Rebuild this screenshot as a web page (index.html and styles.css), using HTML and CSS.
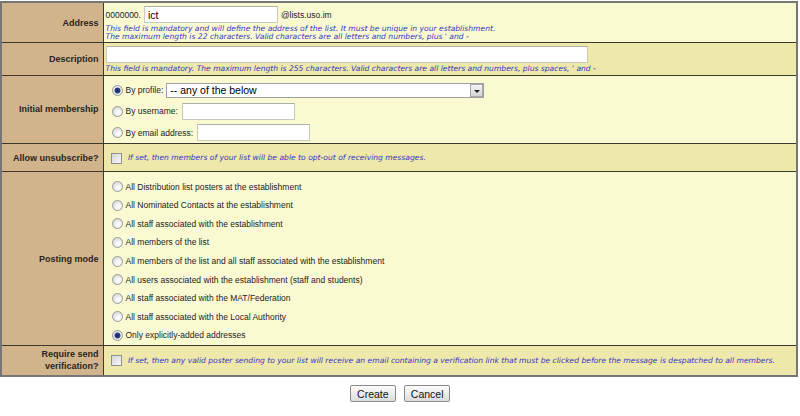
FILE: index.html
```html
<!DOCTYPE html>
<html>
<head>
    <title>New distribution list</title>
    <link rel="stylesheet" href="styles.css">
</head>
<body>
    <form class="list-form">
        <table class="form-table">
            <colgroup>
                <col class="col-label">
                <col>
            </colgroup>

            <tr class="row-light">
                <td class="label">Address</td>
                <td class="value">
                    <div class="address-line">
                        <span>0000000.</span>
                        <input type="text" class="text-input address-input" value="ict">
                        <span>@lists.uso.im</span>
                    </div>
                    <div class="help">This field is mandatory and will define the address of the list. It must be unique in your establishment.<br>The maximum length is 22 characters. Valid characters are all letters and numbers, plus ' and -</div>
                </td>
            </tr>

            <tr class="row-dark">
                <td class="label">Description</td>
                <td class="value">
                    <input type="text" class="text-input desc-input">
                    <div class="help">This field is mandatory. The maximum length is 255 characters. Valid characters are all letters and numbers, plus spaces, ' and -</div>
                </td>
            </tr>

            <tr class="row-light">
                <td class="label">Initial membership</td>
                <td class="value membership">
                    <label class="option option-wide">
                        <input type="radio" name="membership" checked> By profile:
                        <span class="select-box">
                            <select class="profile-select">
                                <option>-- any of the below</option>
                            </select>
                            <span class="select-arrow"></span>
                        </span>
                    </label>
                    <label class="option option-wide">
                        <input type="radio" name="membership"> By username:
                        <input type="text" class="text-input small-input">
                    </label>
                    <label class="option option-wide">
                        <input type="radio" name="membership"> By email address:
                        <input type="text" class="text-input small-input">
                    </label>
                </td>
            </tr>

            <tr class="row-dark check-row">
                <td class="label">Allow unsubscribe?</td>
                <td class="value check-cell">
                    <input type="checkbox">
                    <span class="help">If set, then members of your list will be able to opt-out of receiving messages.</span>
                </td>
            </tr>

            <tr class="row-light">
                <td class="label">Posting mode</td>
                <td class="value posting">
                    <label class="option"><input type="radio" name="posting"> All Distribution list posters at the establishment</label>
                    <label class="option"><input type="radio" name="posting"> All Nominated Contacts at the establishment</label>
                    <label class="option"><input type="radio" name="posting"> All staff associated with the establishment</label>
                    <label class="option"><input type="radio" name="posting"> All members of the list</label>
                    <label class="option"><input type="radio" name="posting"> All members of the list and all staff associated with the establishment</label>
                    <label class="option"><input type="radio" name="posting"> All users associated with the establishment (staff and students)</label>
                    <label class="option"><input type="radio" name="posting"> All staff associated with the MAT/Federation</label>
                    <label class="option"><input type="radio" name="posting"> All staff associated with the Local Authority</label>
                    <label class="option"><input type="radio" name="posting" checked> Only explicitly-added addresses</label>
                </td>
            </tr>

            <tr class="row-dark verify-row">
                <td class="label">Require send<br>verification?</td>
                <td class="value check-cell">
                    <input type="checkbox">
                    <span class="help">If set, then any valid poster sending to your list will receive an email containing a verification link that must be clicked before the message is despatched to all members.</span>
                </td>
            </tr>
        </table>

        <div class="buttons">
            <button type="button" class="btn">Create</button>
            <button type="button" class="btn">Cancel</button>
        </div>
    </form>
</body>
</html>
```

FILE: styles.css
```css
/* GENERAL */
body {
    margin: 0;
    padding: 0;
    background-color: #fff;
    font-family: 'Liberation Sans', Arial, sans-serif;
    font-size: 8.5px;
    color: #222;
}

.list-form {
    margin: 0;
}


/* FORM TABLE */
.form-table {
    width: 798px;
    margin: 1px 0 0 0;
    border-collapse: collapse;
    table-layout: fixed;
    border: 2px solid #767676;
}

.col-label {
    width: 102px;
}

.form-table td {
    border: 1px solid #3b3a2c;
    padding: 0;
}

.label {
    background-color: #d2b48c;
    text-align: right;
    vertical-align: middle;
    font-weight: bold;
    font-size: 9px;
    color: #26261e;
    padding-right: 4px !important;
    line-height: 12px;
}

.value {
    padding: 3px 3px 2px 2px !important;
    vertical-align: top;
}

.row-light .value {
    background-color: #fafad2;
}

.row-dark .value {
    background-color: #eee8aa;
}

.check-row {
    height: 28px;
}

.verify-row {
    height: 31px;
}


/* HELP TEXT */
.help {
    font-family: 'DejaVu Sans', Verdana, sans-serif;
    font-style: italic;
    font-size: 7.6px;
    line-height: 7.5px;
    color: #3636c4;
    margin-top: 2px;
}


/* TEXT INPUTS */
.text-input {
    box-sizing: border-box;
    height: 17px;
    border: 1px solid #c9c9c0;
    border-top-color: #b0b0a8;
    background-color: #fff;
    font-family: 'Liberation Sans', Arial, sans-serif;
    font-size: 10.5px;
    padding: 0 3px;
    margin: 0;
    outline: none;
}

.address-line {
    display: flex;
    align-items: center;
    gap: 3px;
}

.address-input {
    width: 134px;
}

.desc-input {
    display: block;
    width: 482px;
}

.small-input {
    width: 113px;
    margin-left: 2px;
}


/* RADIO OPTIONS */
.option {
    display: flex;
    align-items: center;
    gap: 2px;
    height: 18.6px;
    padding-left: 6px;
}

.option-wide {
    height: 21.3px;
}

.membership {
    padding-top: 4px !important;
    padding-bottom: 0 !important;
}

.posting {
    padding-top: 5px !important;
    padding-bottom: 0 !important;
}

input[type="radio"] {
    appearance: none;
    -webkit-appearance: none;
    width: 11px;
    height: 11px;
    margin: 0 1px 0 0;
    border-radius: 50%;
    border: 1px solid #9b9b9b;
    background: radial-gradient(circle at 60% 65%, #ffffff 0, #f2f2f2 35%, #c9c9c9 100%);
    flex: none;
}

input[type="radio"]:checked {
    background: radial-gradient(circle at 50% 50%, #1c2a66 0, #2b3f86 2.6px, #f0f0f0 3.4px, #d0d0d0 100%);
}


/* SELECT */
.select-box {
    position: relative;
    display: inline-block;
    margin-left: 1px;
}

.profile-select {
    appearance: none;
    -webkit-appearance: none;
    box-sizing: border-box;
    width: 318px;
    height: 15px;
    border: 1px solid #a0a0a0;
    background-color: #fff;
    font-family: 'Liberation Sans', Arial, sans-serif;
    font-size: 10.5px;
    padding: 0 3px;
    margin: 0;
    border-radius: 0;
    outline: none;
    display: block;
}

.select-arrow {
    position: absolute;
    top: 1px;
    right: 1px;
    width: 13px;
    height: 13px;
    box-sizing: border-box;
    border: 1px solid #a8a8a8;
    background: linear-gradient(#f4f4f4, #d4d4d4);
}

.select-arrow::after {
    content: "";
    position: absolute;
    left: 3px;
    top: 5px;
    border-left: 3px solid transparent;
    border-right: 3px solid transparent;
    border-top: 3px solid #222;
}


/* CHECKBOX ROWS */
.check-cell {
    vertical-align: middle !important;
    padding: 0 0 0 7px !important;
}

.check-cell .help {
    margin: 0 0 0 4px;
}

input[type="checkbox"] {
    appearance: none;
    -webkit-appearance: none;
    width: 11px;
    height: 11px;
    margin: 0;
    vertical-align: middle;
    border: 1px solid #8f8f90;
    background: linear-gradient(135deg, #d6d6d6, #f6f6f6);
}


/* BUTTONS */
.buttons {
    text-align: center;
    margin-top: 8px;
}

.btn {
    box-sizing: border-box;
    width: 46px;
    height: 17px;
    padding: 0;
    margin: 0 3px;
    font-family: 'Liberation Sans', Arial, sans-serif;
    font-size: 10.5px;
    color: #111;
    border: 1px solid #8a8a8a;
    border-radius: 2px;
    background: linear-gradient(#fbfbfb, #dcdcdc);
}
```
